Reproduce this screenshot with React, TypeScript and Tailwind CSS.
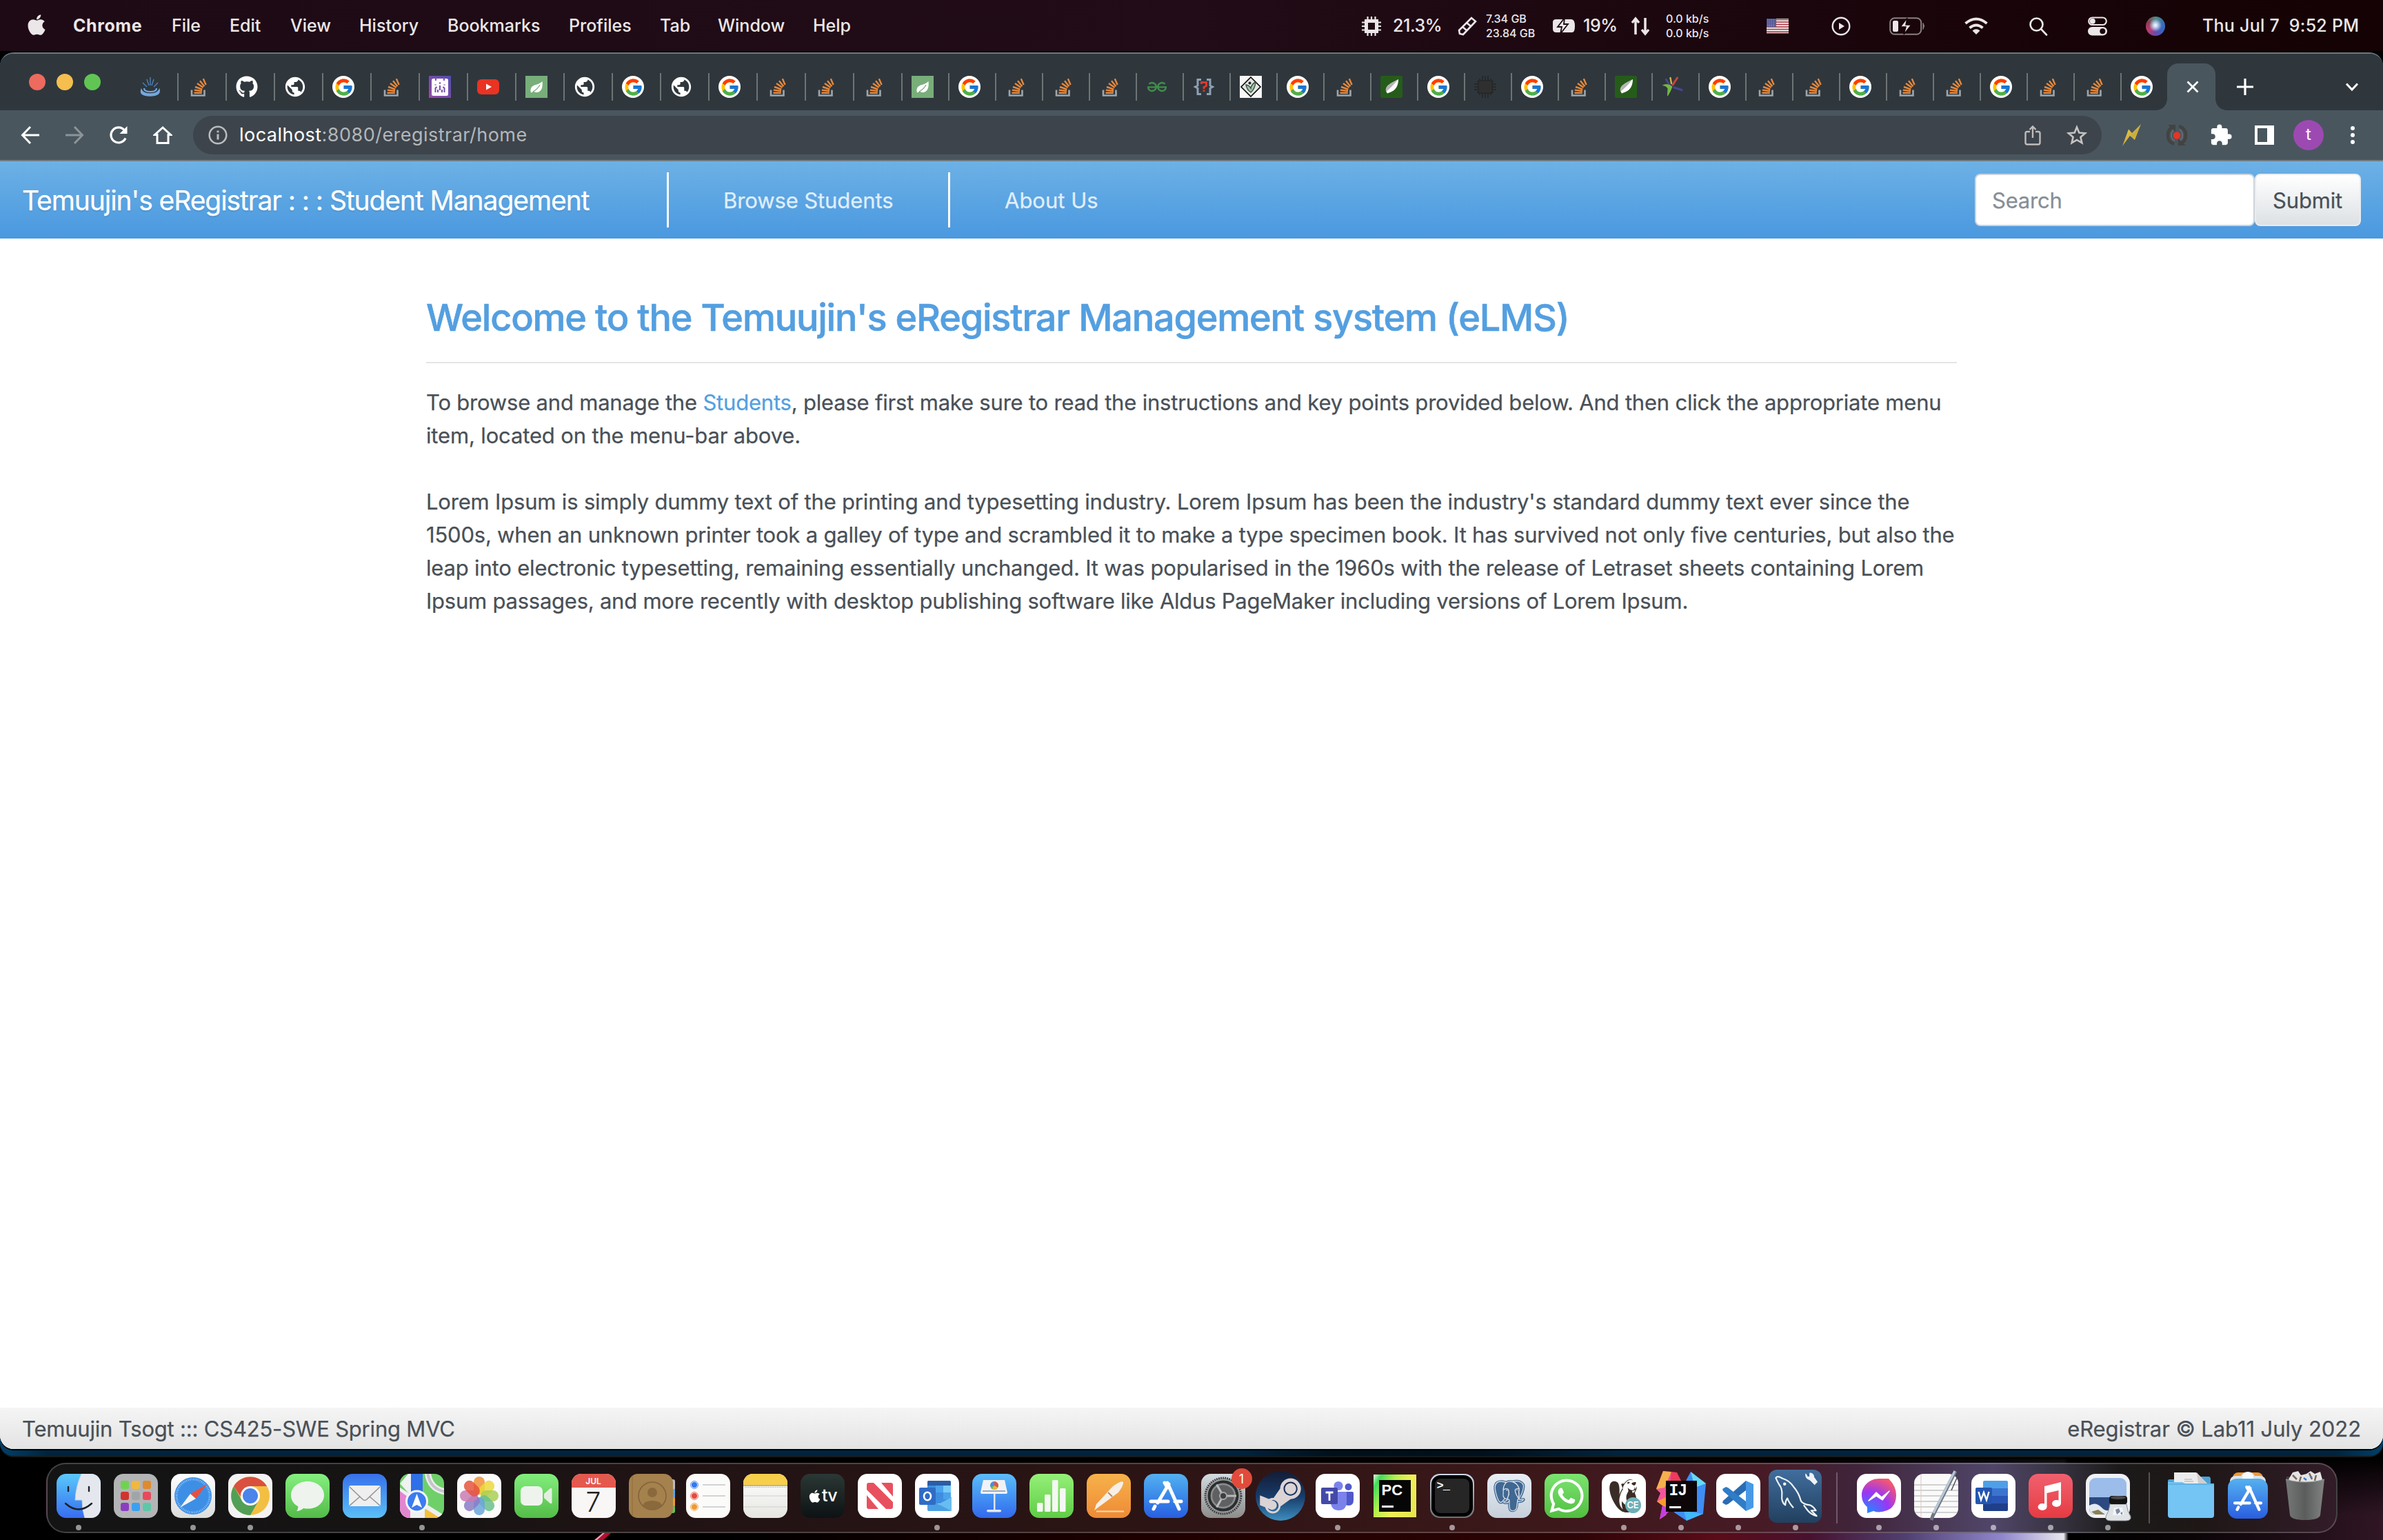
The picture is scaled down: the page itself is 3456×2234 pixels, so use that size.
import React from "react";
import { FaApple, FaGithub, FaSteamSymbol, FaWhatsapp } from "react-icons/fa";
import { FcGoogle } from "react-icons/fc";
import { BiLogoPostgresql } from "react-icons/bi";
import { SiDbeaver, SiGeeksforgeeks } from "react-icons/si";
import { MdExtension, MdPublic } from "react-icons/md";

/* ---------- macOS menu bar ---------- */

const menus = [
  { label: "File", cls: "w-[84px]" },
  { label: "Edit", cls: "w-[88px]" },
  { label: "View", cls: "w-[100px]" },
  { label: "History", cls: "w-[128px]" },
  { label: "Bookmarks", cls: "w-[176px]" },
  { label: "Profiles", cls: "w-[132px]" },
  { label: "Tab", cls: "w-[84px]" },
  { label: "Window", cls: "w-[138px]" },
  { label: "Help", cls: "w-[80px]" },
];

function MenuBar() {
  return (
    <div className="flex h-[74px] shrink-0 items-center justify-between whitespace-nowrap bg-gradient-to-r from-[#1d0a15] via-[#210c17] to-[#140204] text-[25px] font-medium text-[#ebe6e8]">
      <div className="flex items-center pl-[36px] pt-px">
        <div className="w-[70px] pb-[3px]">
          <FaApple className="size-[34px]" />
        </div>
        <div className="w-[143px] font-bold tracking-[0.6px]">Chrome</div>
        {menus.map((m) => (
          <div key={m.label} className={m.cls}>{m.label}</div>
        ))}
      </div>
      <div className="flex w-[1481px] items-center pt-px">
        <svg className="mr-[17px] size-7 shrink-0" viewBox="0 0 28 28" fill="none" stroke="#ebe6e8">
          <rect x="6.500" y="6.500" width="15" height="15" strokeWidth="5" />
          <path d="M8.500 0V5M14 0V5M19.500 0V5M8.500 23V28M14 23V28M19.500 23V28M0 8.500H5M0 14H5M0 19.500H5M23 8.500H28M23 14H28M23 19.500H28" strokeWidth="2.200" />
        </svg>
        <div className="w-[94px] tracking-[-0.4px]">21.3%</div>
        <svg className="mr-[13px] size-7 shrink-0" viewBox="0 0 28 28" fill="none" stroke="#ebe6e8" strokeWidth="2.600">
          <path d="M2 20 20 2l6 5L8 26l-5-1z M7 15l6 5M13 9l6 5" />
        </svg>
        <div className="w-[97px] text-[16px] leading-[21px]">
          <div>7.34 GB</div>
          <div>23.84 GB</div>
        </div>
        <svg className="mr-[12px] h-6 w-8 shrink-0" viewBox="0 0 32 24" fill="#ebe6e8">
          <path d="M5 2h22q5 0 5 10t-5 9H5q-5 0-5-5V6q0-4 5-4z" />
          <path d="M17 0 7 13h6l-2 10L22 9h-6z" stroke="#1d080f" strokeWidth="1.800" />
        </svg>
        <div className="w-[69px] tracking-[-0.4px]">19%</div>
        <svg className="mr-[23px] size-7 shrink-0" viewBox="0 0 28 28" fill="none" stroke="#ebe6e8" strokeWidth="3.500">
          <path d="M7 26V4M2 9l5-6 5 6M21 2v22M16 19l5 6 5-6" />
        </svg>
        <div className="w-[146px] text-[16px] leading-[21px]">
          <div>0.0 kb/s</div>
          <div>0.0 kb/s</div>
        </div>
        <svg className="mr-[62px] h-[22px] w-8 shrink-0" viewBox="0 0 32 22">
          <rect width="32" height="22" fill="#f1eeee" />
          <path d="M0 1.500H32M0 5H32M0 8.500H32M0 12H32M0 15.500H32M0 19H32M0 21.500H32" stroke="#a8323c" strokeWidth="1.700" />
          <rect width="14" height="12" fill="#4a4f8c" />
          <path d="M1.500 2H13M1.500 5H13M1.500 8H13M1.500 10.500H13" stroke="#dcdcee" strokeWidth="1" strokeDasharray="1.200 1.500" />
        </svg>
        <svg className="mr-[56px] size-7 shrink-0" viewBox="0 0 28 28" fill="none" stroke="#ebe6e8" strokeWidth="2.400">
          <circle cx="14" cy="14" r="12.300" />
          <path d="M11 9v10l8-5z" fill="#ebe6e8" stroke="none" />
        </svg>
        <svg className="mr-[56px] h-[26px] w-[52px] shrink-0" viewBox="0 0 52 26" fill="none">
          <rect x="1.200" y="1.200" width="45" height="23.600" rx="6.500" stroke="#8b7f83" strokeWidth="2" />
          <path d="M49 8.500q3 4 0 9z" fill="#8b7f83" stroke="#8b7f83" />
          <rect x="5" y="5" width="8" height="16" rx="2" fill="#ebe6e8" />
          <path d="M26 1 16 14h8l-3 11 11-14h-8z" fill="#ebe6e8" stroke="#1a060b" strokeWidth="1.500" />
        </svg>
        <svg className="mr-[58px] h-[26px] w-9 shrink-0" viewBox="0 0 36 26" fill="none" stroke="#ebe6e8" strokeWidth="4">
          <path d="M2.500 9Q18-4 33.500 9M8.500 15.500Q18 7.500 27.500 15.500" />
          <path d="M12.500 19.500Q18 15 23.500 19.500L18 25z" fill="#ebe6e8" stroke="none" />
        </svg>
        <svg className="mr-[58px] size-7 shrink-0" viewBox="0 0 28 28" fill="none" stroke="#ebe6e8" strokeWidth="2.600">
          <circle cx="11.500" cy="11.500" r="9" />
          <path d="m18 18 8 8.500" strokeLinecap="round" />
        </svg>
        <svg className="mr-[56px] size-7 shrink-0" viewBox="0 0 28 28">
          <rect x="1.200" y="1.500" width="25.600" height="10.500" rx="5.250" fill="none" stroke="#ebe6e8" strokeWidth="2.200" />
          <circle cx="6.800" cy="6.700" r="4" fill="#ebe6e8" />
          <rect y="15" width="28" height="12.500" rx="6.250" fill="#ebe6e8" />
          <circle cx="21.300" cy="21.200" r="4" fill="#1a060b" />
        </svg>
        <div className="mr-[54px] size-7 shrink-0 rounded-full bg-[radial-gradient(circle_at_50%_45%,#ffffff_0%,#b8c8e8_18%,transparent_45%),conic-gradient(#4a8f86,#3c6fb0,#3a63c4,#6a4aa8,#c03a72,#8a3c4c,#4a8f86)]" />
        <div className="whitespace-pre tracking-[0.250px]">Thu Jul 7  9:52 PM</div>
      </div>
    </div>
  );
}

/* ---------- favicons ---------- */

type Fav = "so" | "g" | "globe" | "git" | "cup" | "cal" | "yt" | "leaf" | "gfg" | "bug" | "dia" | "thy" | "chip" | "pin";

function Favicon({ kind }: { kind: Fav }) {
  switch (kind) {
    case "g":
      return (
        <div className="flex size-8 items-center justify-center rounded-full bg-white">
          <FcGoogle className="size-[29px]" />
        </div>
      );
    case "git":
      return <FaGithub className="size-8 text-white" />;
    case "gfg":
      return <SiGeeksforgeeks className="ml-[2px] size-[28px] text-[#3f8f4a]" />;
    case "globe":
      return <MdPublic className="-ml-px size-[34px] text-white" />;
    case "so":
      return (
        <svg className="size-8" viewBox="0 0 32 32" fill="none">
          <path d="M6 20.500V28.500H24.500V20.500" stroke="#9fa6aa" strokeWidth="2.600" />
          <path d="M9.500 24.800H20.800M9.800 20.600 21 22M11 16 21.300 19.600M14 11 22.600 17M18 7.200 24.400 15.200M22.800 4.200 26.600 13" stroke="#e8883a" strokeWidth="2.400" />
        </svg>
      );
    case "cup":
      return (
        <svg className="size-8" viewBox="0 0 32 32" fill="none" stroke="#74a8e0">
          <path d="M16 2V14M11 5 14 14M21 5 18 14M5 10l6 6M27 10l-6 6" stroke="#4d82bc" strokeWidth="1.400" />
          <path d="M3 20Q0 29 15.500 29T29 20Q26 26 15.500 26T3 20z" fill="#74a8e0" strokeWidth="1.500" />
          <path d="M7 18q0 5 9 5t9-5" strokeWidth="2.200" />
        </svg>
      );
    case "cal":
      return (
        <svg className="size-8" viewBox="0 0 32 32">
          <defs>
            <linearGradient id="fav-cal" x1="0" y1="1" x2="1" y2="0">
              <stop offset="0" stopColor="#9b4aa8" />
              <stop offset="1" stopColor="#4f4fb0" />
            </linearGradient>
          </defs>
          <rect width="32" height="32" fill="url(#fav-cal)" />
          <rect x="4" y="4" width="24" height="25" rx="2.500" fill="#fff" />
          <path d="M10 2v5M22 2v5" stroke="#8a4aac" strokeWidth="2" />
          <path d="M9.500 24v-6l2-2M13 24v-4M16 21v-7M19 24v-4M22.500 24v-6l-2-2" stroke="#7b4bb0" strokeWidth="2" fill="none" />
          <path d="M9.500 13.500v-1M16 11.500v-2M22.500 13.500v-1" stroke="#7b4bb0" strokeWidth="2.600" />
        </svg>
      );
    case "yt":
      return (
        <svg className="size-8" viewBox="0 0 32 32">
          <rect y="5" width="32" height="22" rx="6" fill="#e93323" />
          <path d="M13 11.500v9l8-4.500z" fill="#fff" />
        </svg>
      );
    case "leaf":
      return (
        <svg className="size-8" viewBox="0 0 32 32">
          <rect width="32" height="32" fill="#78ae7a" />
          <path d="M24.500 8Q26 22 17.500 24 14 24.500 12 22.500L8 24.500Q5.500 17 13 13.500 21 11.500 24.500 8z" fill="#fff" />
          <path d="M11 23Q18 19 21 13" stroke="#78ae7a" strokeWidth="1.300" fill="none" />
        </svg>
      );
    case "thy":
      return (
        <svg className="size-8" viewBox="0 0 32 32">
          <rect width="32" height="32" rx="2.500" fill="#265c1a" />
          <path d="M26 5Q26 19 15 23.500L10 25.500Q6 20 10 15.500 14 11 26 5z" fill="#fff" />
          <path d="M25 6Q12 11 9 16 6.500 20 8.500 22.500 15 18 25 6z" fill="#b6b3b3" />
        </svg>
      );
    case "bug":
      return (
        <svg className="size-8" viewBox="0 0 32 32" fill="none" strokeWidth="3">
          <path d="M12 5.500H7V14L3.500 16 7 18v8.500h5M20 5.500h5V14l3.500 2L25 18v8.500h-5" stroke="#8fa0b3" />
          <path d="M12.500 12V9.500h7v5L16 16.500v2.500M16 20.500V23" stroke="#d8392f" />
        </svg>
      );
    case "dia":
      return (
        <svg className="size-8" viewBox="0 0 32 32">
          <rect width="32" height="32" fill="#f7f7f7" />
          <path d="M16 2 30 16 16 30 2 16z" fill="#e3e5e3" stroke="#111" strokeWidth="1.700" />
          <path d="M9 13q5 1 7 5 1-6 7-9-1 10-7 15-6-4-7-11z" fill="#a9bfae" stroke="#33523c" strokeWidth="1.400" />
          <circle cx="14.500" cy="10.500" r="2" fill="#222" />
        </svg>
      );
    case "chip":
      return (
        <svg className="size-8" viewBox="0 0 32 32" stroke="#262829" strokeWidth="2" fill="#2f2f2f">
          <path d="M8 4v24M12 0v32M16 0v32M20 0v32M24 4v24M0 12h32M0 16h32M0 20h32M4 8h24M4 24h24" />
          <rect x="6" y="7" width="20" height="18" rx="2" />
        </svg>
      );
    default:
      return (
        <svg className="size-8" viewBox="0 0 32 32" fill="none" strokeLinecap="round">
          <path d="M11 13 6 5" stroke="#4b4492" strokeWidth="2.600" />
          <path d="M14 11 12.500 3" stroke="#d3b24a" strokeWidth="2.400" />
          <path d="M16 13 22.500 3" stroke="#cc463c" strokeWidth="3" />
          <path d="M18 17 29 20.500" stroke="#4b4492" strokeWidth="3.400" />
          <path d="M2 13.500Q9 11 15 15.500 13 22 8.500 29 9 20 9 18 6 14 2 13.500z" fill="#74b843" stroke="#74b843" />
        </svg>
      );
  }
}

const wideTabs: Fav[] = ["cup", "so", "git", "globe", "g", "so", "cal", "yt", "leaf", "globe", "g", "globe", "g", "so", "so", "so"];
const narrowTabs: Fav[] = [
  "leaf", "g", "so", "so", "so", "gfg", "bug", "dia", "g", "so", "thy", "g", "chip", "g",
  "so", "thy", "pin", "g", "so", "so", "g", "so", "so", "g", "so", "so", "g",
];

function Tab({ kind, wide, first }: { kind: Fav; wide?: boolean; first?: boolean }) {
  return (
    <div className={wide ? "flex w-[70px] shrink-0 items-center" : "flex w-[68px] shrink-0 items-center"}>
      <div className={first ? "mr-[13px] h-10 w-[2px]" : "mr-[13px] h-10 w-[2px] bg-[#6e7474]"} />
      <Favicon kind={kind} />
    </div>
  );
}

function TabStrip() {
  return (
    <div className="flex h-[82px] shrink-0 bg-[#2f373d]">
      <div className="flex w-[187px] items-center gap-4 pl-[42px]">
        <div className="size-6 rounded-full bg-[#ed6a5e]" />
        <div className="size-6 rounded-full bg-[#f5bf4f]" />
        <div className="size-6 rounded-full bg-[#61c554]" />
      </div>
      <div className="flex pt-[14px]">
        {wideTabs.map((k, i) => (
          <Tab key={i} kind={k} wide first={i === 0} />
        ))}
        {narrowTabs.map((k, i) => (
          <Tab key={i} kind={k} />
        ))}
        <div className="relative flex w-[70px] items-center justify-center rounded-t-2xl bg-[#49565e]">
          <div className="absolute -left-4 bottom-0 size-4 bg-[radial-gradient(circle_at_0_0,#2f373d_15.500px,#49565e_16px)]" />
          <div className="absolute -right-4 bottom-0 size-4 bg-[radial-gradient(circle_at_100%_0,#2f373d_15.500px,#49565e_16px)]" />
          <svg className="ml-[4px] size-[18px]" viewBox="0 0 18 18" stroke="#fff" strokeWidth="2.800">
            <path d="M1.500 1.500 16.500 16.500M16.500 1.500 1.500 16.500" />
          </svg>
        </div>
        <div className="flex w-[242px] items-center justify-between pl-[31px] pr-[34px]">
          <svg className="size-6" viewBox="0 0 24 24" stroke="#fff" strokeWidth="3.200">
            <path d="M12 0V24M0 12H24" />
          </svg>
          <svg className="size-5" viewBox="0 0 20 20" fill="none" stroke="#fff" strokeWidth="3">
            <path d="M2 5.500 10 14l8-8.500" />
          </svg>
        </div>
      </div>
    </div>
  );
}

function Toolbar() {
  return (
    <div className="flex h-[74px] shrink-0 items-center border-b-2 border-[#727d82] bg-[#49565e]">
      <div className="flex w-[280px] items-center gap-9 pl-[30px]">
        <svg className="size-7" viewBox="0 0 28 28" fill="none" stroke="#fff" strokeWidth="3">
          <path d="M27 14H3M14 2 2.500 14 14 26" />
        </svg>
        <svg className="size-7" viewBox="0 0 28 28" fill="none" stroke="#8b9498" strokeWidth="3">
          <path d="M1 14H25M14 2 25.500 14 14 26" />
        </svg>
        <svg className="size-7" viewBox="0 0 28 28" fill="none" stroke="#fff" strokeWidth="3.200">
          <path d="M24 18.500A11 11 0 1 1 22.500 7" />
          <path d="M26.500 1V12H15.500z" fill="#fff" stroke="none" />
        </svg>
        <svg className="size-7" viewBox="0 0 28 28" fill="none" stroke="#fff" strokeWidth="3">
          <path d="M14 3 2.500 13.500H6V25.500H22V13.500h3.500z" />
        </svg>
      </div>
      <div className="flex h-14 w-[2768px] items-center justify-between rounded-full bg-[#3d444b] pl-[22px] pr-[20px]">
        <div className="flex items-center gap-[17px] text-[27px] tracking-[0.47px] text-[#b3b7ba]">
          <svg className="size-7" viewBox="0 0 28 28" fill="none" stroke="#b9bcbe" strokeWidth="2.600">
            <circle cx="14" cy="14" r="12.300" />
            <path d="M14 12.500V20.500M14 7.500V10.300" strokeWidth="3" />
          </svg>
          <div className="pt-px">
            <span className="text-white">localhost</span>:8080/eregistrar/home
          </div>
        </div>
        <div className="flex items-center gap-[36px]">
          <svg className="h-[30px] w-6" viewBox="0 0 24 30" fill="none" stroke="#bfbcbb" strokeWidth="2.400">
            <path d="M8 10H4Q1.500 10 1.500 12.500V26Q1.500 28.500 4 28.500H20Q22.500 28.500 22.500 26V12.500Q22.500 10 20 10H16M12 19V2.500M7.500 7 12 2.500 16.500 7" />
          </svg>
          <svg className="size-[32px]" viewBox="0 0 32 32" fill="none" stroke="#c5c3c2" strokeWidth="2.600">
            <path d="m16 4.500 3.300 8 8.700.7-6.600 5.700 2 8.500L16 22.900 8.600 27.400l2-8.500L4 13.200l8.700-.7z" />
          </svg>
        </div>
      </div>
      <div className="flex flex-1 items-center pl-[29px]">
        <svg className="mr-[36px] h-8 w-7" viewBox="0 0 28 32">
          <defs>
            <linearGradient id="bolt" x1="0" y1="0" x2="1" y2="1">
              <stop offset="0" stopColor="#ffe14d" />
              <stop offset="0.550" stopColor="#c9ab3e" />
              <stop offset="1" stopColor="#e8cf3c" />
            </linearGradient>
          </defs>
          <path d="M10 7.500 15 13 28 0 19 23 12 17 1 32z" fill="url(#bolt)" />
        </svg>
        <svg className="mr-[31px] size-8" viewBox="0 0 32 32" fill="none">
          <path d="M13 3Q3 6 3 16T12 29M19 3q10 3 10 13T20 29" stroke="#434342" strokeWidth="4.500" />
          <path d="M12 8Q8 11 8 16.500t5 7.500M20 8q4 3 4 8.500t-5 7.500" stroke="#6b7276" strokeWidth="1.500" />
          <path d="M3 1H14V11zM29 31H18V21z" fill="#434342" />
          <circle cx="16" cy="16.500" r="5.200" fill="#ea3323" />
        </svg>
        <MdExtension className="mr-[32px] size-[34px] text-white" />
        <div className="mr-[28px] h-7 w-7 border-y-4 border-l-4 border-r-[10px] border-white" />
        <div className="mr-[39px] flex size-11 items-center justify-center rounded-full bg-[#9c4ab2] pb-[2px] text-[24px] text-white">t</div>
        <div className="flex flex-col gap-1">
          <div className="size-[6px] rounded-full bg-white" />
          <div className="size-[6px] rounded-full bg-white" />
          <div className="size-[6px] rounded-full bg-white" />
        </div>
      </div>
    </div>
  );
}

/* ---------- web page ---------- */

function Page() {
  return (
    <div className="flex flex-1 flex-col whitespace-nowrap bg-white text-[31px] leading-[48px] tracking-[-0.2px] text-[#495057] [-webkit-text-stroke:0.25px]">
      <header className="flex h-28 shrink-0 items-center justify-between bg-gradient-to-b from-[#6db1e6] via-[#57a2e2] via-60% to-[#4a98df] px-8">
        <div className="flex items-center">
          <div className="w-[935px] pt-px text-[39px] tracking-[-1.070px] text-white [text-shadow:0_2px_2px_rgba(0,0,0,0.1)]">
            Temuujin's eRegistrar : : : Student Management
          </div>
          <div className="flex h-20 w-[408px] items-center border-l-[3px] border-white pl-[79px] pt-px tracking-[-0.1px] text-[#e0eefa]">Browse Students</div>
          <div className="flex h-20 items-center border-l-[3px] border-white pl-[79px] pt-px tracking-normal text-[#e0eefa]">About Us</div>
        </div>
        <div className="flex">
          <div className="flex h-[76px] w-[406px] items-center rounded-lg border-2 border-[#ced4da] bg-white pl-[23px] pt-px text-[#868e96]">Search</div>
          <div className="flex h-[76px] w-[154px] items-center justify-center rounded-lg border-2 border-[#e9ecef] bg-gradient-to-b from-white to-[#dde1e4] pr-px pt-px">
            Submit
          </div>
        </div>
      </header>
      <main className="mx-auto w-[2220px] flex-1 pt-[81px]">
        <h1 className="h-[98px] text-[54px] font-medium leading-[67px] tracking-[-1.200px] text-[#549fe0] [-webkit-text-stroke:0.6px]">
          Welcome to the Temuujin's eRegistrar Management system (eLMS)
        </h1>
        <div className="h-[2px] bg-[#e3e4e5]" />
        <p className="mt-[33px]">
          To browse and manage the <a className="text-[#549fe0]">Students</a>, please first make sure to read the instructions and key points provided below. And then click the appropriate menu
          <br />
          <span className="tracking-[-0.15px]">item, located on the menu-bar above.</span>
        </p>
        <p className="mt-12">
          <span className="tracking-[-0.185px]">Lorem Ipsum is simply dummy text of the printing and typesetting industry. Lorem Ipsum has been the industry's standard dummy text ever since the</span>
          <br />
          <span className="tracking-[-0.210px]">1500s, when an unknown printer took a galley of type and scrambled it to make a type specimen book. It has survived not only five centuries, but also the</span>
          <br />
          <span className="tracking-[-0.175px]">leap into electronic typesetting, remaining essentially unchanged. It was popularised in the 1960s with the release of Letraset sheets containing Lorem</span>
          <br />
          <span className="tracking-[-0.240px]">Ipsum passages, and more recently with desktop publishing software like Aldus PageMaker including versions of Lorem Ipsum.</span>
        </p>
      </main>
      <footer className="flex h-[60px] shrink-0 items-center justify-between bg-gradient-to-b from-[#f5f5f5] to-[#e3e3e3] px-8 pt-[2px]">
        <div>Temuujin Tsogt ::: CS425-SWE Spring MVC</div>
        <div className="tracking-[-0.080px]">eRegistrar © Lab11 July 2022</div>
      </footer>
    </div>
  );
}

/* ---------- dock ---------- */

function Art({ children }: { children: React.ReactNode }) {
  return (
    <svg className="size-16 overflow-visible" viewBox="0 0 64 64">
      {children}
    </svg>
  );
}

function Tile({ bg, children }: { bg: string; children?: React.ReactNode }) {
  return <div className={`relative flex size-16 items-center justify-center overflow-hidden rounded-[14px] ${bg}`}>{children}</div>;
}

function StoreA() {
  return <path d="M34 13 51 51M30 13 34 20M36 15 20 42M16 47 14 51M10 40H35M45 40H54" stroke="#fff" strokeWidth="5" strokeLinecap="round" fill="none" />;
}

const petals = ["#f0913a", "#ecd83c", "#a9cf55", "#6bbf8c", "#6ba6dc", "#8b7bc4", "#c97bb4", "#e5533c"];
const pads = ["#6fd34e", "#f0b83e", "#e08a2e", "#d0342c", "#a0a5a8", "#e84a5c", "#8b3fc0", "#3ba0f0", "#5cc8a8"];

const apps: { name: string; dot?: boolean; art: React.ReactNode }[] = [
  {
    name: "finder", dot: true,
    art: (
      <Tile bg="bg-gradient-to-b from-[#5cc8fa] to-[#3a6cf0]">
        <Art>
          <path d="M36 0Q28 18 27 38H37Q37 52 41 64H64V0z" fill="#e4e7ee" />
          <path d="M36 0Q28 18 27 38H37Q37 52 41 64" fill="none" stroke="#c9d3e2" strokeWidth="1" />
          <path d="M17 19v6M47 19v6M13 43Q32 60 51 43" stroke="#1d2026" strokeWidth="2.400" strokeLinecap="round" fill="none" />
        </Art>
      </Tile>
    ),
  },
  {
    name: "launchpad",
    art: (
      <Tile bg="bg-[#b3b4b6]">
        <Art>
          {pads.map((c, i) => (
            <rect key={i} x={10 + (i % 3) * 16} y={10 + Math.floor(i / 3) * 16} width="12" height="12" rx="3" fill={c} />
          ))}
        </Art>
      </Tile>
    ),
  },
  {
    name: "safari", dot: true,
    art: (
      <Tile bg="bg-gradient-to-b from-white to-[#dcdcdc]">
        <Art>
          <circle cx="32" cy="32" r="27" fill="#3d8fe6" />
          <circle cx="32" cy="32" r="24" fill="none" stroke="#b8dcf8" strokeWidth="3" strokeDasharray="0.700 1.800" />
          <path d="M52 15 28 29 36 36z" fill="#e8503c" />
          <path d="M13 49 28 29 36 36z" fill="#f4f4f4" />
        </Art>
      </Tile>
    ),
  },
  {
    name: "chrome", dot: true,
    art: (
      <Tile bg="bg-[#f4f3f3]">
        <Art>
          <circle cx="32" cy="32" r="28" fill="#f3bf42" />
          <path d="M32 18H56A28 28 0 0 0 8 18L20 36z" fill="#d9503f" />
          <path d="M8 18A28 28 0 0 0 32 60L44 39 32 46 20 39z" fill="#529f58" />
          <circle cx="32" cy="32" r="14" fill="#fff" />
          <circle cx="32" cy="32" r="11" fill="#4b84ea" />
        </Art>
      </Tile>
    ),
  },
  {
    name: "messages",
    art: (
      <Tile bg="bg-gradient-to-b from-[#84f07e] to-[#54bb49]">
        <Art>
          <path d="M32 11C18 11 8 20 8 31 8 38 12 44 18 47 19 50 17 53 16 54 20 54 24 52 26 50 44 53 56 43 56 31 56 20 46 11 32 11z" fill="#eef3ed" />
        </Art>
      </Tile>
    ),
  },
  {
    name: "mail",
    art: (
      <Tile bg="bg-gradient-to-b from-[#3870ea] to-[#5cbff8]">
        <Art>
          <rect x="9" y="17" width="46" height="30" rx="3" fill="#f0efef" />
          <path d="M10 19 29 37Q32 40 35 37L54 19M10 46 25 33M54 46 39 33" fill="none" stroke="#8f9296" strokeWidth="1.500" />
        </Art>
      </Tile>
    ),
  },
  {
    name: "maps", dot: true,
    art: (
      <Tile bg="bg-[#6fd06a]">
        <Art>
          <path d="M0 20 64 60V64H0z" fill="#eeeff2" />
          <path d="M0 25 15 36V64H0z" fill="#e287cf" />
          <path d="M36 64 36 50 58 64z" fill="#f2c13c" />
          <path d="M40-4Q42 22 66 26" fill="none" stroke="#ececef" strokeWidth="9" />
          <path d="M40-4Q42 22 66 26" fill="none" stroke="#c6c6ca" strokeWidth="4" />
          <path d="M0 14 12 0H16V32z" fill="#f0f1f3" />
          <path d="M0 8 8 0H12L0 14z" fill="#6fd06a" />
          <path d="M16 0H33V40H16z" fill="#2f6fe8" />
          <circle cx="24.500" cy="40" r="15" fill="#3b7cf0" stroke="#f3f5f8" strokeWidth="3" />
          <path d="M24.500 29 32 49 24.500 45 17 49z" fill="#fff" />
        </Art>
      </Tile>
    ),
  },
  {
    name: "photos",
    art: (
      <Tile bg="bg-[#fbfbfb]">
        <Art>
          {petals.map((c, i) => (
            <rect key={i} x="24" y="4" width="16" height="26" rx="8" fill={c} opacity="0.850" transform={`rotate(${i * 45} 32 32)`} />
          ))}
        </Art>
      </Tile>
    ),
  },
  {
    name: "facetime",
    art: (
      <Tile bg="bg-gradient-to-b from-[#82ee7c] to-[#54bd48]">
        <Art>
          <rect x="9" y="18" width="32" height="28" rx="7" fill="#eef4ed" />
          <path d="M43 29 52 21Q54.500 20 54.500 23V41Q54.500 44 52 43L43 35z" fill="#e2efe0" />
        </Art>
      </Tile>
    ),
  },
  {
    name: "calendar",
    art: (
      <Tile bg="bg-[#f8f7f6]">
        <div className="flex size-16 flex-col items-center">
          <div className="h-5 w-16 bg-[#e4594e] text-center text-[12px] font-semibold leading-[21px] text-white">JUL</div>
          <div className="text-[39px] font-light leading-[42px] text-[#222]">7</div>
        </div>
      </Tile>
    ),
  },
  {
    name: "contacts",
    art: (
      <Art>
        <rect x="50" y="8" width="17" height="16" rx="3" fill="#b9bcc0" />
        <rect x="50" y="22" width="17" height="14" fill="#58a8ea" />
        <rect x="50" y="35" width="17" height="12" fill="#f09a38" />
        <rect x="50" y="46" width="17" height="11" rx="3" fill="#62c654" />
        <rect width="64" height="64" rx="13" fill="#a5814d" />
        <path d="M5 3V61" stroke="#8d6c3d" strokeWidth="1" />
        <circle cx="34" cy="32" r="20" fill="none" stroke="#80633a" strokeWidth="1.500" />
        <circle cx="34" cy="27" r="7" fill="#8a6a3c" />
        <path d="M20 46Q22 39 34 39T48 46Q42 52 34 52T20 46z" fill="#8a6a3c" />
      </Art>
    ),
  },
  {
    name: "reminders",
    art: (
      <Tile bg="bg-[#fbfbfa]">
        <Art>
          {["#3478f0", "#e44b3c", "#ee9a34"].map((c, i) => (
            <g key={c}>
              <circle cx="12" cy={16 + i * 16} r="4" fill={c} stroke={c} />
              <circle cx="12" cy={16 + i * 16} r="4.600" fill="none" stroke="#fff" strokeWidth="0.900" />
              <circle cx="12" cy={16 + i * 16} r="5.400" fill="none" stroke={c} strokeWidth="0.900" />
              <path d={`M24 ${16 + i * 16}H57`} stroke="#c6c6c8" strokeWidth="1.500" />
            </g>
          ))}
        </Art>
      </Tile>
    ),
  },
  {
    name: "notes",
    art: (
      <Tile bg="bg-gradient-to-b from-white to-[#e6e6e2]">
        <Art>
          <rect width="64" height="16" fill="#f7cf4a" />
          <path d="M0 17H64" stroke="#a59d86" strokeWidth="1.500" />
          <path d="M2 19.500H64" stroke="#a8a8a6" strokeWidth="1.200" strokeDasharray="1.200 1.400" />
          <path d="M0 32H64M0 48H64" stroke="#cfcfcd" strokeWidth="1.200" />
        </Art>
      </Tile>
    ),
  },
  {
    name: "tv",
    art: (
      <Tile bg="bg-gradient-to-b from-[#2b3835] to-[#0d1214]">
        <div className="flex items-center text-[25px] font-medium leading-none tracking-tight text-white">
          <FaApple className="size-[21px]" />
          <span className="pb-[2px]">tv</span>
        </div>
      </Tile>
    ),
  },
  {
    name: "news",
    art: (
      <Tile bg="bg-white">
        <Art>
          <path d="M13 16Q13 13 16 13H23L51 41V48Q51 51 48 51H41L13 23z" fill="#e8505f" />
          <path d="M34 13H48Q51 13 51 16V33zM13 31 30 51H16Q13 51 13 48z" fill="#e8505f" />
        </Art>
      </Tile>
    ),
  },
  {
    name: "outlook", dot: true,
    art: (
      <Tile bg="bg-white">
        <Art>
          <rect x="18" y="10" width="34" height="33" rx="2" fill="#3f8ee0" />
          <path d="M18 12Q18 10 20 10H50Q52 10 52 12V17H18z" fill="#2a5da8" />
          <path d="M30 17H41V27H30zM41 27H52V37H41z" fill="#4ba3ec" />
          <path d="M41 17H52V27H41z" fill="#79ccf8" />
          <path d="M18 36 35 44 53 34V52Q53 54 51 54H20Q18 54 18 52z" fill="#4a9fe4" />
          <path d="M53 34V54L34 44z" fill="#68bdf0" />
          <rect x="6" y="20" width="24" height="25" rx="2" fill="#2f6cc6" />
          <ellipse cx="18" cy="32.500" rx="5" ry="5.800" fill="none" stroke="#fff" strokeWidth="2.600" />
        </Art>
      </Tile>
    ),
  },
  {
    name: "keynote",
    art: (
      <Tile bg="bg-gradient-to-b from-[#5cbdf9] to-[#3468ec]">
        <Art>
          <path d="M16 9H47L51 27Q51 29 49 29H14Q12 29 12 27z" fill="#f1f2f5" />
          <path d="M15 24H48V26H15z" fill="#9fa9bb" />
          <path d="M31 29H33.500V53H31z" fill="#dfe5ee" />
          <rect x="21" y="52" width="21" height="3.500" rx="1.700" fill="#e6e8ee" />
          <circle cx="32" cy="17" r="6" fill="#5cc45a" />
          <path d="M32 17V11A6 6 0 0 1 37 20z" fill="#e8523c" />
          <path d="M32 17 37 20A6 6 0 0 1 29 22z" fill="#f0b53c" />
          <path d="M32 17V11A6 6 0 0 0 26.500 19z" fill="#4a8cf0" />
        </Art>
      </Tile>
    ),
  },
  {
    name: "numbers",
    art: (
      <Tile bg="bg-gradient-to-b from-[#94f077] to-[#5fcc46]">
        <Art>
          <g fill="#f4f8f2">
            <rect x="11" y="42" width="8.500" height="13" rx="1.500" />
            <rect x="22" y="30" width="8.500" height="25" rx="1.500" />
            <rect x="33" y="9" width="8.500" height="46" rx="1.500" />
            <rect x="44" y="21" width="8.500" height="34" rx="1.500" />
          </g>
        </Art>
      </Tile>
    ),
  },
  {
    name: "pages",
    art: (
      <Tile bg="bg-gradient-to-b from-[#f6b24a] to-[#ee8a36]">
        <Art>
          <path d="M53 12Q54 16 46 27L19 47 11 53 14 44 37 19Q50 9 53 12z" fill="#f6efe8" />
          <path d="M31 27 37 33" stroke="#b08868" strokeWidth="2" />
          <path d="M14 54.500H54" stroke="#fbd9ae" strokeWidth="2" />
        </Art>
      </Tile>
    ),
  },
  {
    name: "app store",
    art: (
      <Tile bg="bg-gradient-to-b from-[#54b1f0] to-[#2a5ee0]">
        <Art>
          <StoreA />
        </Art>
      </Tile>
    ),
  },
  {
    name: "settings",
    art: (
      <div className="relative">
        <Tile bg="bg-gradient-to-b from-[#d3dce1] to-[#8d8d8b]">
          <Art>
            <circle cx="32" cy="32" r="26" fill="#9a9c9e" stroke="#3a3c3e" strokeWidth="3" strokeDasharray="1.800 1.300" />
            <circle cx="32" cy="32" r="20.500" fill="#5e6062" stroke="#2b2d2f" strokeWidth="4" />
            <circle cx="32" cy="32" r="17" fill="none" stroke="#8a8c8e" strokeWidth="2.500" />
            <path d="M32 32H51M32 32 22.500 15.500M32 32 22.500 48.500" stroke="#b8babc" strokeWidth="3" />
            <circle cx="32" cy="32" r="5" fill="#3c3e40" stroke="#a6a8aa" strokeWidth="2" />
          </Art>
        </Tile>
        <div className="absolute -right-[10px] -top-[8px] flex size-[30px] items-center justify-center rounded-full bg-[#e04b3c] text-[18px] text-white">1</div>
      </div>
    ),
  },
  {
    name: "steam",
    art: (
      <div className="flex size-[72px] shrink-0 items-center justify-center overflow-hidden rounded-full bg-gradient-to-b from-[#131c35] via-[#173a68] to-[#3e8fc0]">
        <FaSteamSymbol className="size-[68px] text-[#dcd3d4]" />
      </div>
    ),
  },
  {
    name: "teams", dot: true,
    art: (
      <Tile bg="bg-white">
        <Art>
          <circle cx="47.500" cy="19" r="5" fill="#5059c9" />
          <path d="M41 26H53Q55 26 55 28V38Q55 46 48 46 42 46 41 40z" fill="#5059c9" />
          <circle cx="33" cy="17.500" r="6.600" fill="#7b83eb" />
          <path d="M22 26H45V40Q45 53 33.500 53T22 40z" fill="#7b83eb" />
          <rect x="8" y="20" width="24" height="24" rx="2" fill="#4449a8" />
          <path d="M14.500 27H25.500M20 27V39" stroke="#fff" strokeWidth="2.800" />
        </Art>
      </Tile>
    ),
  },
  {
    name: "pycharm",
    art: (
      <div className="flex size-[62px] items-center justify-center bg-[linear-gradient(120deg,#e6fbe0_0%,#41dc5c_12%,#b6f04c_35%,#f2ee58_60%,#e6e34e_100%)]">
        <div className="flex size-[46px] flex-col justify-between bg-[#050605] pb-[6px] pl-1 pt-1">
          <div className="font-['Liberation_Sans'] text-[22px] font-bold leading-[22px] text-white">PC</div>
          <div className="h-[3px] w-[17px] bg-white" />
        </div>
      </div>
    ),
  },
  {
    name: "terminal", dot: true,
    art: (
      <Tile bg="bg-gradient-to-b from-[#cdd8e6] to-[#6f7173]">
        <div className="size-[60px] rounded-[13px] border-[5px] border-black bg-[#262626] pl-[3px] pt-[2px] font-['Liberation_Mono'] text-[17px] font-bold leading-[18px] tracking-[-1px] text-white">&gt;_</div>
      </Tile>
    ),
  },
  {
    name: "postgres",
    art: (
      <Tile bg="bg-gradient-to-b from-[#e9eef4] to-[#c6cfdb]">
        <BiLogoPostgresql className="size-[56px] text-[#406892]" />
      </Tile>
    ),
  },
  {
    name: "whatsapp",
    art: (
      <Tile bg="bg-gradient-to-b from-[#7be470] to-[#51be40]">
        <FaWhatsapp className="size-[56px] text-white" />
      </Tile>
    ),
  },
  {
    name: "dbeaver", dot: true,
    art: (
      <Tile bg="bg-white">
        <SiDbeaver className="size-[50px] pr-[2px] text-[#3a2d27]" />
        <div className="absolute bottom-[7px] right-[7px] flex size-[23px] items-center justify-center rounded-full bg-[#6db0b8] text-[13px] font-semibold tracking-tight text-white">CE</div>
      </Tile>
    ),
  },
  {
    name: "intellij", dot: true,
    art: (
      <div className="relative size-16">
        <Art>
          <path d="M6-4 26 0 34 14 10 60 1 66 5 46-3 40 2 28-4 22z" fill="#f2559a" />
          <path d="M6-4 18-3 8 20-4 22z" fill="#f6b04c" />
          <path d="M-3 40 10 34 12 50 5 46z" fill="#f79a2c" />
          <path d="M1 66 5 46 18 52z" fill="#c43fe0" />
          <path d="M18-3 26-2 34 14 16 12z" fill="#ee3a5c" />
          <path d="M46-3 68 14 64 58 40 68 22 56 40 8z" fill="#3f8ef5" />
          <path d="M46-3 68 14 52 20z" fill="#62dcf5" />
          <path d="M64 58 40 68 36 54z" fill="#42b8f8" />
        </Art>
        <div className="absolute left-[10px] top-[10px] flex size-[45px] flex-col justify-between bg-[#0c0608] pb-[5px] pl-[5px] pt-1">
          <div className="font-['Liberation_Mono'] text-[23px] font-bold leading-[22px] tracking-[-1px] text-white">IJ</div>
          <div className="h-[3px] w-[17px] bg-white" />
        </div>
      </div>
    ),
  },
  {
    name: "vscode", dot: true,
    art: (
      <Tile bg="bg-white">
        <Art>
          <path d="M43 10 10 39 9 42 14 45 17 44 43 24z" fill="#2a6cb4" />
          <path d="M43 54 10 25 9 22 14 19 17 20 43 40z" fill="#2f7cc8" />
          <path d="M43 10 54 15V49L43 54z" fill="#4799e6" />
        </Art>
      </Tile>
    ),
  },
  {
    name: "mysql", dot: true,
    art: (
      <div className="flex size-[77px] shrink-0 items-center justify-center rounded-[12px] bg-gradient-to-b from-[#416e9e] to-[#22405f]">
        <svg className="size-[77px]" viewBox="0 0 77 78" fill="none" stroke="#eef3f7" strokeWidth="2.200" strokeLinejoin="round">
          <path d="M36 56Q30 50 27 42 24 46 24 52 18 48 19 38 20 28 15 22 12 17 10 12 13 8 20 13 30 16 36 25 44 34 47 46 50 51 60 52 65 54 69 60L62 60 70 68Q62 66 57 60L51 52" />
          <circle cx="23" cy="21" r="1.200" fill="#eef3f7" />
          <path d="M54 6Q53 13 60 15L67 22 71 18 66 11Q66 5 60 5V10L57 11z" fill="#eef3f7" strokeWidth="1" />
        </svg>
      </div>
    ),
  },
];

const recent: { name: string; dot?: boolean; art: React.ReactNode }[] = [
  {
    name: "messenger", dot: true,
    art: (
      <Tile bg="bg-white">
        <Art>
          <defs>
            <radialGradient id="msgr" cx="0.200" cy="1" r="1.100">
              <stop offset="0" stopColor="#1f8bff" />
              <stop offset="0.550" stopColor="#9a36f5" />
              <stop offset="1" stopColor="#f8586c" />
            </radialGradient>
          </defs>
          <path d="M32 7C18 7 7 18 7 31 7 38 10 44 15 48V57L24 54Q28 55.500 32 55.500 57 54 57 31 57 18 46 7 32 7z" fill="url(#msgr)" />
          <path d="M17 39 28 27 36 34 47 25 37 38 28 32z" fill="#fff" stroke="#fff" strokeWidth="1.500" strokeLinejoin="round" />
        </Art>
      </Tile>
    ),
  },
  {
    name: "textedit", dot: true,
    art: (
      <div className="relative">
        <Tile bg="bg-[#fafafa]">
          <Art>
            <path d="M0 16H64M0 24H64M0 32H64M0 40H64M0 48H64M0 56H64" stroke="#c3c4c5" strokeWidth="1.400" />
            <path d="M10 0V64" stroke="#dcc9c4" strokeWidth="1" />
          </Art>
        </Tile>
        <svg className="absolute left-0 top-0 size-16 overflow-visible" viewBox="0 0 64 64">
          <path d="M60-4 27 61 25 67" stroke="#6e7780" strokeWidth="5" fill="none" />
          <path d="M59-4 28 57" stroke="#b9c8d6" strokeWidth="3.200" fill="none" />
          <path d="M62 6 54 24" stroke="#4a525a" strokeWidth="1.500" />
        </svg>
      </div>
    ),
  },
  {
    name: "word", dot: true,
    art: (
      <Tile bg="bg-white">
        <Art>
          <rect x="17" y="10" width="36" height="44" rx="2" fill="#4f9fe8" />
          <path d="M17 21H53V32H17z" fill="#3a74cf" />
          <path d="M17 32H53V43H17z" fill="#2a55b5" />
          <path d="M17 43H53V52Q53 54 51 54H19Q17 54 17 52z" fill="#203f8a" />
          <rect x="6" y="20" width="24" height="24" rx="2" fill="#2456b0" />
          <path d="M10.500 26 14 38 18 27 22 38 25.500 26" fill="none" stroke="#fff" strokeWidth="2.400" />
        </Art>
      </Tile>
    ),
  },
  {
    name: "music", dot: true,
    art: (
      <Tile bg="bg-gradient-to-b from-[#f0606e] to-[#e63a42]">
        <Art>
          <path d="M23 18 47 12V43H43.500V24L26.500 28V48H23z" fill="#fff" />
          <ellipse cx="20" cy="48" rx="6.500" ry="5" fill="#fff" />
          <ellipse cx="40.500" cy="43" rx="6.500" ry="5" fill="#fff" />
        </Art>
      </Tile>
    ),
  },
  {
    name: "preview", dot: true,
    art: (
      <Art>
        <rect width="64" height="64" rx="14" fill="#eff1f4" />
        <rect x="5" y="6" width="54" height="53" rx="9" fill="#9cbcea" />
        <path d="M5 34H59V50Q59 59 50 59H14Q5 59 5 50z" fill="#2d4a80" />
        <path d="M5 46Q14 40 22 48T34 52V59H14Q5 59 5 50z" fill="#e4ebf0" />
        <path d="M8 55 18 52 28 59H14z" fill="#8a8056" />
        <path d="M35 44H59Q60 54 65 62 66 68 58 68H36Q28 68 29 62 34 54 35 44z" fill="#dfe3e6" stroke="#8b9195" />
        <path d="M41 49H53L55 60H39z" fill="#f4f5f6" />
        <path d="M43 52 48 50 50 55 45 59zM50 57 53 55V60z" fill="#7c8aa6" />
        <rect x="34" y="32" width="26" height="12" rx="4" fill="#141414" />
        <ellipse cx="47" cy="34.500" rx="11" ry="2.500" fill="#4a4a4a" />
      </Art>
    ),
  },
];

const files: { name: string; dot?: boolean; art: React.ReactNode }[] = [
  {
    name: "downloads",
    art: (
      <Art>
        <path d="M-1 10Q-1 8 2 8H8V4H58Q61 4 61 8V20H-1z" fill="#4ca3d6" />
        <path d="M8-2H40L56 14V20H8z" fill="#ececec" />
        <path d="M41-2 55 14H43z" fill="#cfcfcf" />
        <path d="M23 8H34M23 11H36" stroke="#a9a9a9" />
        <path d="M-1 12H20L24 14H66V60Q66 64 62 64H3Q-1 64-1 60z" fill="#74c4f4" />
        <path d="M-1 15H66" stroke="#5cafdf" strokeWidth="1.500" />
      </Art>
    ),
  },
  {
    name: "applications",
    art: (
      <Art>
        <rect x="10" y="-2" width="44" height="20" rx="8" fill="#ee9a34" />
        <circle cx="32" cy="8" r="11" fill="#e9eaec" />
        <rect x="6" y="3" width="52" height="18" rx="8" fill="#dfe2e6" />
        <circle cx="32" cy="6" r="8" fill="#fafafa" />
        <defs>
          <linearGradient id="apps" x1="0" y1="0" x2="0" y2="1">
            <stop offset="0" stopColor="#54b1f0" />
            <stop offset="1" stopColor="#2a5ee0" />
          </linearGradient>
        </defs>
        <rect x="3" y="7" width="58" height="58" rx="13" fill="url(#apps)" />
        <g transform="translate(4.500 8) scale(.86)">
          <StoreA />
        </g>
      </Art>
    ),
  },
  {
    name: "trash",
    art: (
      <Art>
        <defs>
          <linearGradient id="bin" x1="0" y1="0" x2="1" y2="0">
            <stop offset="0" stopColor="#767777" />
            <stop offset="0.500" stopColor="#5b5c5c" />
            <stop offset="1" stopColor="#828383" />
          </linearGradient>
        </defs>
        <path d="M5 4 54 3 60 10 4 12z" fill="#3e3f40" />
        <path d="M8 8 14-2 22-4 26 2 34 0 40-4 46 0 54-3 57 8 52 12H14z" fill="#e4e4e6" />
        <path d="M14 2 20 8M26 4 24 11M38-1 42 8M48 2 46 10" stroke="#7a6a58" strokeWidth="2.500" />
        <path d="M30 6 34 9M42 4 40 6" stroke="#3a7ad0" strokeWidth="2.500" />
        <path d="M4 8Q32 16 60 8L54 60Q52 67 32 67T10 60z" fill="url(#bin)" />
        <path d="M4 8Q32 16 60 8" fill="none" stroke="#9a9b9b" strokeWidth="1.200" />
      </Art>
    ),
  },
];

function DockGroup({ items }: { items: { name: string; dot?: boolean; art: React.ReactNode }[] }) {
  return (
    <>
      {items.map((a) => (
        <div key={a.name} className="flex w-[83px] shrink-0 flex-col items-center gap-[5px]">
          <div className="flex h-[83px] w-[83px] items-center justify-center pt-[9px]">{a.art}</div>
          <div className={a.dot ? "size-2 rounded-full bg-white/55" : "size-2"} />
        </div>
      ))}
    </>
  );
}

function Dock() {
  return (
    <div className="ml-[67px] flex h-[102px] w-[3323px] rounded-[28px] border-2 border-white/20 bg-[linear-gradient(90deg,#141414_0%,#171313_18%,#201314_26%,#2c1414_48%,#3c181a_65%,#471b26_75%,#40243a_79%,#504668_85%,#36323f_88%,#1c1a1a_90.500%,#1e1716_94%,#321c28_100%)] pl-[3px]">
      <DockGroup items={apps} />
      <div className="ml-[18px] mr-[18px] mt-3 h-[74px] w-[2px] shrink-0 bg-white/25" />
      <DockGroup items={recent} />
      <div className="ml-[18px] mr-[17px] mt-3 h-[74px] w-[2px] shrink-0 bg-white/25" />
      <DockGroup items={files} />
    </div>
  );
}

export default function App() {
  return (
    <div className="flex h-[2234px] w-[3456px] flex-col overflow-hidden bg-black font-['Inter',sans-serif]">
      <MenuBar />
      <div className="mt-[2px] flex h-[2038px] shrink-0 flex-col rounded-[20px] border-b-2 border-[#15191b] bg-[linear-gradient(90deg,#00406a_0%,#00243f_2%,#00243f_52%,#00101c_56%,#00101c_62%,#00243f_68%,#00243f_98%,#00406a_100%)] pb-[10px]">
        <div className="flex flex-1 flex-col overflow-hidden rounded-[20px] border-t-2 border-[#70787b] shadow-[0_2px_0_#000]">
          <TabStrip />
          <Toolbar />
          <Page />
        </div>
      </div>
      <div className="relative flex h-[120px] shrink-0 flex-col bg-[linear-gradient(180deg,#000_0%,transparent_70%),linear-gradient(90deg,#000_0%,#000_30%,#200000_49%,#2c0406_66%,#5a0c18_72%,#471230_76%,#504070_80%,#8f86cc_84%,#e8e6ee_86.600%,#000_86.800%,#0a0407_92%,#301624_100%)] pt-2">
        <svg className="absolute bottom-0 left-[862px] h-[10px] w-8" viewBox="0 0 32 10">
          <path d="M0 10 12 0H24L13 10z" fill="#b01030" />
          <path d="M0 10 12 0H15L4 10z" fill="#e8a0b0" />
        </svg>
        <Dock />
      </div>
    </div>
  );
}
